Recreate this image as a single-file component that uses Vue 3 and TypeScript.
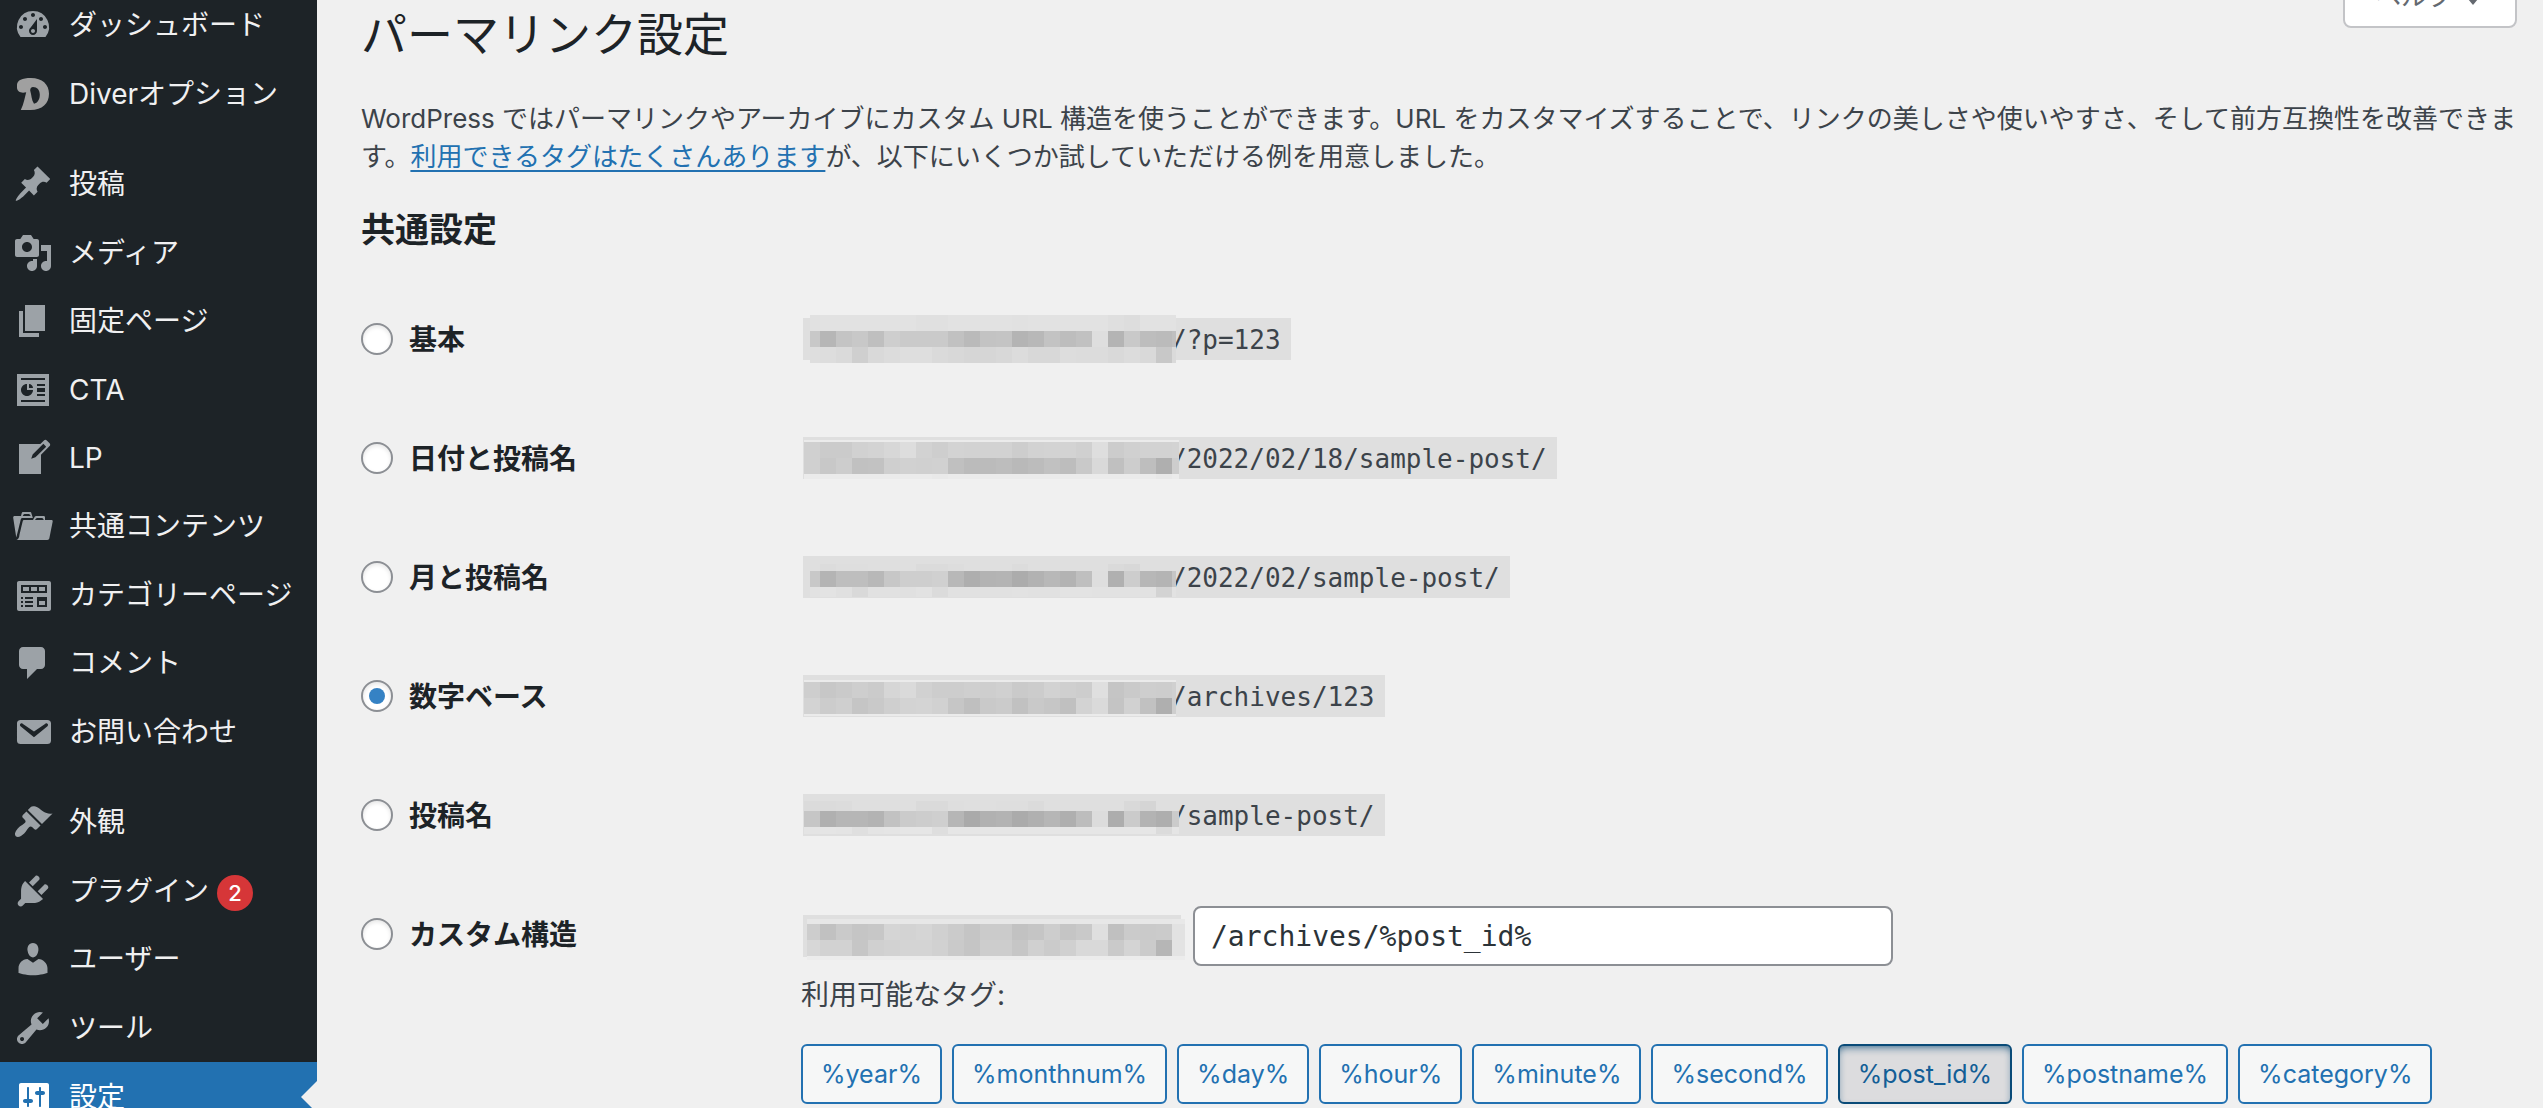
<script setup lang="ts">
import { ref } from 'vue'

interface MenuItem {
  label: string
  icon: string
  badge?: number
  current?: boolean
}

interface Band {
  y: number
  h: number
  tones: string
}

interface Structure {
  id: string
  label: string
  path: string
  from: number
  to: number
  bands: Band[]
}

const icons: Record<string, string> = {
  dashboard:
    'M3.76 16h12.48A7.998 7.998 0 0 0 10 3a7.998 7.998 0 0 0-6.24 13zM10 4c.55 0 1 .45 1 1s-.45 1-1 1-1-.45-1-1 .45-1 1-1zM6 6c.55 0 1 .45 1 1s-.45 1-1 1-1-.45-1-1 .45-1 1-1zm8 0c.55 0 1 .45 1 1s-.45 1-1 1-1-.45-1-1 .45-1 1-1zm-5.37 5.55L12 7v6c0 1.1-.9 2-2 2s-2-.9-2-2c0-.57.24-1.08.63-1.45zM4 10c.55 0 1 .45 1 1s-.45 1-1 1-1-.45-1-1 .45-1 1-1zm12 0c.55 0 1 .45 1 1s-.45 1-1 1-1-.45-1-1 .45-1 1-1zm-5 3c0-.55-.45-1-1-1s-1 .45-1 1 .45 1 1 1 1-.45 1-1z',
  diver:
    'M2 5.2C2.3 3.2 4.4 2 9 2c5.6 0 9 3.2 9 7.9C18 14.8 14.6 18 8.8 18H3.9c1.6-3.300 2-6.300 2.700-8.900C4.200 9.800 2.200 8.900 2 7zM8.600 8.200c.7 2.300.6 4.700 1.900 6.700 1.900-.4 2.900-2.300 2.900-4.500 0-2.400-1.300-3.900-3.400-3.900C9.100 6.500 8.600 7.200 8.600 8.200z',
  post:
    'M10.44 3.02l1.82-1.82 6.36 6.35-1.83 1.82c-1.05-.68-2.48-.57-3.41.36l-.75.75c-.92.93-1.04 2.35-.35 3.41l-1.83 1.82-2.41-2.41-2.8 2.79c-.42.42-3.38 2.71-3.8 2.29s1.86-3.39 2.28-3.81l2.79-2.79L4.1 9.36l1.83-1.82c1.05.69 2.48.57 3.4-.36l.75-.75c.93-.92 1.05-2.35.36-3.41z',
  media:
    'M13 11V4c0-.55-.45-1-1-1h-1.67L9 1H5L3.67 3H2c-.55 0-1 .45-1 1v7c0 .55.45 1 1 1h10c.55 0 1-.45 1-1zM7 4.5c1.38 0 2.5 1.12 2.5 2.5S8.38 9.5 7 9.5 4.5 8.38 4.5 7 5.62 4.5 7 4.5zM14 6h5v10.5c0 1.38-1.12 2.5-2.5 2.5S14 17.88 14 16.5s1.12-2.5 2.5-2.5c.17 0 .34.02.5.05V9h-3V6zm-4 8.05V13h2v3.5c0 1.38-1.12 2.5-2.5 2.5S7 17.88 7 16.5 8.12 14 9.5 14c.17 0 .34.02.5.05z',
  page: 'M6 15V2h10v13H6zm-1 1h8v2H3V5h2v11z',
  analytics:
    'M18 18V2H2v16h16zM16 5H4V4h12v1zM7 7v3h3c0 1.66-1.34 3-3 3s-3-1.34-3-3 1.34-3 3-3zm1 2V7c1.1 0 2 .9 2 2H8zm8-1h-4V7h4v1zm0 3h-4V9h4v2zm0 2h-4v-1h4v1zm0 3H4v-1h12v1z',
  write:
    'M16.89 1.2l1.41 1.41c.39.39.39 1.02 0 1.41L14 8.33V18H3V3h10.67l1.8-1.8c.4-.39 1.03-.4 1.42 0zm-5.66 8.48l5.37-5.36-1.42-1.42-5.36 5.37-.71 2.12z',
  portfolio:
    'M4 5H.78c-.37 0-.74.32-.69.84l1.56 9.99S3.5 8.47 3.86 6.7c.11-.53.61-.7.98-.7H10s-.7-2.08-.77-2.31C9.11 3.25 8.89 3 8.45 3H5.14c-.36 0-.7.23-.8.64C4.25 4.04 4 5 4 5zm4.88 0h-4s.42-1 .87-1h2.13c.48 0 1 1 1 1zM2.67 16.25c-.31.47-.76.75-1.26.75h15.73c.54 0 .92-.31 1.03-.83.44-2.19 1.68-8.44 1.68-8.44.07-.5-.3-.73-.62-.73H16V5.53c0-.16-.26-.53-.66-.53h-3.76c-.52 0-.87.58-.87.58L10 7H5.59c-.32 0-.63.19-.69.5 0 0-1.59 6.7-1.72 7.33-.07.37-.22.99-.51 1.42zM15.38 7H11s.58-1 1.13-1h2.29c.71 0 .96 1 .96 1z',
  feedback:
    'M3 3h15c.55 0 1 .45 1 1v13c0 .55-.45 1-1 1H3c-.55 0-1-.45-1-1V4c0-.55.45-1 1-1zM4 5v4h13V5zM5 6h3v2H5zM9 6h3v2H9zM13 6h3v2h-3zM4 11v1h1v-1zM6 11v1h4v-1zM4 13v1h1v-1zM6 13v1h4v-1zM4 15v1h1v-1zM6 15v1h4v-1zM12 11v5h5v-5zM13 13h3v2h-3z',
  comment:
    'M5 2h9c1.1 0 2 .9 2 2v7c0 1.1-.9 2-2 2h-2l-5 5v-5H5c-1.1 0-2-.9-2-2V4c0-1.1.9-2 2-2z',
  mail:
    'M3.87 4h13.25C18.37 4 19 4.59 19 5.79v8.42c0 1.19-.63 1.79-1.88 1.79H3.87c-1.25 0-1.88-.6-1.88-1.79V5.79c0-1.2.63-1.79 1.88-1.79zm6.62 8.6l6.74-5.53c.24-.2.43-.66.13-1.07-.29-.41-.82-.42-1.17-.17l-5.7 3.86L4.8 5.83c-.35-.25-.88-.24-1.17.17-.3.41-.11.87.13 1.07z',
  appearance:
    'M14.48 11.06L7.41 3.99l1.5-1.5c.5-.56 2.3-.47 3.51.32 1.21.8 1.43 1.28 2.91 2.1 1.18.64 2.45 1.26 4.45.85zm-.71.71L6.7 4.7 4.93 6.47c-.39.39-.39 1.02 0 1.41l1.06 1.06c.39.39.39 1.03 0 1.42-.6.6-1.43 1.11-2.21 1.69-.35.26-.7.53-1.01.84C1.43 14.23.4 16.08 1.4 17.07c.99 1 2.84-.03 4.18-1.36.31-.31.58-.66.85-1.02.57-.78 1.08-1.61 1.69-2.21.39-.39 1.02-.39 1.41 0l1.06 1.06c.39.39 1.02.39 1.41 0z',
  plugins:
    'M13.11 4.36L9.87 7.6 8 5.73l3.24-3.24c.35-.34 1.05-.2 1.56.32.52.51.66 1.21.31 1.55zm-8 1.77l.91-1.12 9.01 9.01-1.19.84c-.71.71-2.63 1.16-3.82 1.16H6.14L4.9 17.26c-.59.59-1.54.59-2.12 0-.59-.58-.59-1.53 0-2.12l1.24-1.24v-3.88c0-1.13.4-3.19 1.09-3.89zm7.26 3.97l3.24-3.24c.34-.35 1.04-.21 1.55.31.52.51.66 1.21.31 1.55l-3.24 3.25z',
  users:
    'M10 9.25c-2.27 0-2.73-3.44-2.73-3.44C7 4.02 7.82 2 9.97 2c2.16 0 2.98 2.02 2.71 3.81 0 0-.41 3.44-2.68 3.44zm0 2.57L12.72 10c2.39 0 4.52 2.33 4.52 4.53v2.49s-3.65 1.13-7.24 1.13c-3.65 0-7.24-1.13-7.24-1.13v-2.49c0-2.25 1.94-4.48 4.47-4.48z',
  tools:
    'M16.68 9.77c-1.34 1.34-3.3 1.67-4.95.99l-5.41 6.52c-.99.99-2.59.99-3.58 0s-.99-2.59 0-3.57l6.52-5.42c-.68-1.65-.35-3.61.99-4.95 1.28-1.28 3.12-1.62 4.72-1.06l-2.89 2.89 2.82 2.82 2.86-2.87c.53 1.58.18 3.39-1.08 4.65zM3.81 16.21c.4.39 1.04.39 1.43 0 .4-.4.4-1.04 0-1.43-.39-.4-1.03-.4-1.43 0-.39.39-.39 1.03 0 1.43z',
  settings:
    'M18 16V4c0-.55-.45-1-1-1H4c-.55 0-1 .45-1 1v13c0 .55.45 1 1 1h13c.55 0 1-.45 1-1zM8 11h1c.55 0 1 .45 1 1s-.45 1-1 1H8v1.5c0 .28-.22.5-.5.5s-.5-.22-.5-.5V13H6c-.55 0-1-.45-1-1s.45-1 1-1h1V5.5c0-.28.22-.5.5-.5s.5.22.5.5V11zm5-2h-1c-.55 0-1-.45-1-1s.45-1 1-1h1V5.5c0-.28.22-.5.5-.5s.5.22.5.5V7h1c.55 0 1 .45 1 1s-.45 1-1 1h-1v5.5c0 .28-.22.5-.5.5s-.5-.22-.5-.5V9z',
}

const groups: MenuItem[][] = [
  [
    { label: 'ダッシュボード', icon: 'dashboard' },
    { label: 'Diverオプション', icon: 'diver' },
  ],
  [
    { label: '投稿', icon: 'post' },
    { label: 'メディア', icon: 'media' },
    { label: '固定ページ', icon: 'page' },
    { label: 'CTA', icon: 'analytics' },
    { label: 'LP', icon: 'write' },
    { label: '共通コンテンツ', icon: 'portfolio' },
    { label: 'カテゴリーページ', icon: 'feedback' },
    { label: 'コメント', icon: 'comment' },
    { label: 'お問い合わせ', icon: 'mail' },
  ],
  [
    { label: '外観', icon: 'appearance' },
    { label: 'プラグイン', icon: 'plugins', badge: 2 },
    { label: 'ユーザー', icon: 'users' },
    { label: 'ツール', icon: 'tools' },
    { label: '設定', icon: 'settings', current: true },
  ],
]

// Each band is a strip of the pixelated domain: 24 grey tones, two hex digits each.
const structures: Structure[] = [
  {
    id: 'plain', label: '基本', path: '/?p=123', from: 7, to: 373,
    bands: [
      { y: -3, h: 16, tones: 'e1e2e2e2e2e2e2e0e0e2e2e2e2e1e2e2e2e2e2dfdde2e2e2' },
      { y: 13, h: 16, tones: 'c8b6c4c8bfcecacacac1bac3c4b4b8c3bdc1deb4c9bdbbc0' },
      { y: 29, h: 16, tones: 'dedddacfd9dcdededad8d6d6d8dcd8d8dddcdcd9dcd9c8da' },
    ],
  },
  {
    id: 'day-name', label: '日付と投稿名', path: '/2022/02/18/sample-post/', from: 1, to: 376,
    bands: [
      { y: 3, h: 2, tones: 'ebebebebebebebebebebebebebebebebebebebebebebebeb' },
      { y: 5, h: 16, tones: 'd0cbcbd1d3d7ddd2ced3d2d2d2cdd2d3d3d0deccd0d2d2d3' },
      { y: 21, h: 16, tones: 'd0c8cdc1c2cfd1d0d1c0bbbbbdb9bcc1bdc9d9c0cdbeafcd' },
      { y: 37, h: 5, tones: 'ebebebebebebebebe9ebebebebebebebebebebebebebe8eb' },
    ],
  },
  {
    id: 'month-name', label: '月と投稿名', path: '/2022/02/sample-post/', from: 7, to: 373,
    bands: [
      { y: 8, h: 7, tones: 'dfdcdededfdfdfdbdbdddfdfdfdcdfdfdfdfdfdad8dfdfdf' },
      { y: 15, h: 16, tones: 'c8b4bebeb8c7ceced0b8aeb3b4acb2b8b3bfdeb0cdb7b4c6' },
      { y: 31, h: 10, tones: 'e2e3e0d9e1e1e0e2dbe1e1e1e1e2e1e1e3e3e2e2e2e2d3e2' },
    ],
  },
  {
    id: 'numeric', label: '数字ベース', path: '/archives/123', from: 1, to: 373,
    bands: [
      { y: 5, h: 2, tones: 'ebebebebebebebebebebebebebebebebebebebebebebebeb' },
      { y: 7, h: 16, tones: 'cec7cacecbd6dad1cdcdcfced0caccd2cfcddfc5cacecdd0' },
      { y: 23, h: 16, tones: 'd3cccfc5c9cfd3d4d1c6bfc9cbc1c9c6c0d3dac4d1c1afce' },
      { y: 39, h: 2, tones: 'ebebebebebebebebebebebebebebebebebebebebebebebeb' },
    ],
  },
  {
    id: 'post-name', label: '投稿名', path: '/sample-post/', from: 1, to: 376,
    bands: [
      { y: 7, h: 10, tones: 'dbdbdcdfdfdfdfdadadedfdfdededbdfdfdfdfdfd9d5dfdf' },
      { y: 17, h: 16, tones: 'c6b0b6b6b3c2cbcdcfb6aab1b3abb0b6afbddcadcbb3aecb' },
      { y: 33, h: 7, tones: 'e4e5e4dfe4e5e6e6dee6e6e6e6e6e6e6e6e6e6e6e6e6dbe5' },
    ],
  },
]

const customBands: Band[] = [
  { y: 4, h: 5, tones: 'e7e7e7e7e7e7e7e7e7e7e7e7e7e7e7e7e7e7e7e7e7e7e7e8' },
  { y: 9, h: 16, tones: 'cdc1cac5c7d5d3d5d0cbc5cbcbc2c5cdc5c9dfc0cbcacbe2' },
  { y: 25, h: 16, tones: 'd7d2d2c6d0d2d4d4d1cac5cdcdc6d0cbd0d9d9cad4cbb6e3' },
  { y: 41, h: 4, tones: 'ecececececececececececececececececececececececec' },
]

const tags: string[] = [
  '%year%', '%monthnum%', '%day%', '%hour%', '%minute%', '%second%', '%post_id%', '%postname%', '%category%',
]

const selected = ref('numeric')
const custom = ref('/archives/%post_id%')

const CELL = 16
const FIRST = 17

function cells(band: Band, from: number, to: number) {
  return Array.from({ length: 24 }, (_, i) => {
    const start = i === 0 ? from : FIRST + (i - 1) * CELL
    const end = i === 23 ? to : FIRST + i * CELL
    return { x: start, w: end - start, y: band.y, h: band.h, fill: '#' + band.tones.slice(i * 2, i * 2 + 2).repeat(3) }
  })
}

function mosaic(bands: Band[], from: number, to: number) {
  return bands.flatMap((band) => cells(band, from, to))
}
</script>

<template>
  <div class="admin">
    <nav class="sidebar" aria-label="メインメニュー">
      <ul v-for="(group, g) in groups" :key="g" class="group">
        <li v-for="item in group" :key="item.label">
          <a href="#" class="item" :class="{ current: item.current }">
            <svg class="icon" :class="{ muted: item.icon === 'diver' }" viewBox="0 0 20 20" aria-hidden="true">
              <path :d="icons[item.icon]" fill-rule="evenodd" />
            </svg>
            <span class="name">{{ item.label }}</span>
            <span v-if="item.badge" class="badge">{{ item.badge }}</span>
          </a>
        </li>
      </ul>
    </nav>

    <main class="content">
      <button type="button" class="help">
        ヘルプ
        <svg viewBox="0 0 20 20" aria-hidden="true"><path d="M5 8h10l-5 6z" /></svg>
      </button>

      <h1>パーマリンク設定</h1>
      <p class="intro">
        WordPress ではパーマリンクやアーカイブにカスタム URL 構造を使うことができます。URL をカスタマイズすることで、リンクの美しさや使いやすさ、そして前方互換性を改善できます。<a href="#">利用できるタグはたくさんあります</a>が、以下にいくつか試していただける例を用意しました。
      </p>
      <h2>共通設定</h2>

      <table class="form">
        <tbody>
          <tr v-for="s in structures" :key="s.id">
            <th scope="row">
              <label class="choice">
                <input v-model="selected" type="radio" name="structure" :value="s.id" />
                <span>{{ s.label }}</span>
              </label>
            </th>
            <td>
              <code class="url">
                <svg class="mosaic" aria-hidden="true">
                  <rect
                    v-for="(c, i) in mosaic(s.bands, s.from, s.to)"
                    :key="i" :x="c.x" :y="c.y" :width="c.w" :height="c.h" :fill="c.fill"
                  />
                </svg>
                <span class="path">{{ s.path }}</span>
              </code>
            </td>
          </tr>
          <tr>
            <th scope="row">
              <label class="choice">
                <input v-model="selected" type="radio" name="structure" value="custom" />
                <span>カスタム構造</span>
              </label>
            </th>
            <td class="custom">
              <div class="line">
                <code class="url base">
                  <svg class="mosaic" aria-hidden="true">
                    <rect
                      v-for="(c, i) in mosaic(customBands, 4, 382)"
                      :key="i" :x="c.x" :y="c.y" :width="c.w" :height="c.h" :fill="c.fill"
                    />
                  </svg>
                </code>
                <input v-model="custom" type="text" class="field" aria-label="カスタム構造" />
              </div>
              <p class="hint">利用可能なタグ:</p>
              <div class="tags">
                <button
                  v-for="t in tags" :key="t" type="button" class="tag"
                  :class="{ active: custom.includes(t) }"
                >{{ t }}</button>
              </div>
            </td>
          </tr>
        </tbody>
      </table>
    </main>
  </div>
</template>

<style>
body {
  background: #f0f0f1;
}
</style>

<style scoped>
.admin {
  display: flex;
  height: 100vh;
  overflow: hidden;
  background: #f0f0f0;
  color: #3c434a;
  font-family: Inter, "Noto Sans CJK JP", sans-serif;
  font-size: 26px;
  line-height: 38px;
}

.sidebar {
  flex: none;
  width: 317px;
  background: #1d2327;
}

.group {
  display: grid;
  grid-auto-rows: 1fr;
  list-style: none;
  height: 137px;
  margin: 0 0 22px;
  padding: 0;
}

.group:nth-child(1) {
  margin-top: -9px;
}

.group:nth-child(2) {
  height: 616px;
}

.group:nth-child(3) {
  height: 343px;
}

.item {
  display: flex;
  align-items: center;
  position: relative;
  height: 100%;
  padding-left: 13px;
  color: #f0f0f1;
  font-size: 28px;
  line-height: 36px;
  text-decoration: none;
}

.icon {
  flex: none;
  width: 40px;
  height: 40px;
  margin-right: 16px;
  fill: #9ca2a7;
}

.icon.muted {
  fill: #a0a0a0;
}

.current {
  background: #2271b1;
  color: #fff;
}

.current .icon {
  fill: #fff;
}

.current::after {
  content: "";
  position: absolute;
  right: 0;
  top: 50%;
  margin-top: -16px;
  border: 16px solid transparent;
  border-left-width: 0;
  border-right-color: #f0f0f0;
}

.badge {
  width: 36px;
  height: 36px;
  margin: 4px 0 0 8px;
  border-radius: 18px;
  background: #d63638;
  color: #fff;
  font-size: 22px;
  font-weight: 500;
  line-height: 36px;
  text-align: center;
}

.content {
  flex: 1;
  min-width: 0;
  position: relative;
  padding: 0 24px 0 44px;
}

.help {
  position: absolute;
  top: -34px;
  right: 26px;
  display: flex;
  align-items: center;
  width: 174px;
  height: 62px;
  padding: 0 12px 0 30px;
  border: 2px solid #c3c4c7;
  border-radius: 0 0 8px 8px;
  background: #fff;
  color: #646970;
  font: inherit;
}

.help svg {
  flex: none;
  width: 40px;
  height: 40px;
  fill: #646970;
}

h1 {
  margin: 0;
  padding-top: 4px;
  color: #1d2327;
  font-size: 46px;
  font-weight: 400;
  line-height: 60px;
}

.intro {
  margin: 36px 0 0;
}

.intro a {
  color: #2271b1;
  text-decoration: underline;
  text-underline-offset: 4px;
  text-decoration-thickness: 2px;
}

h2 {
  margin: 33px 0 0;
  color: #1d2327;
  font-size: 34px;
  font-weight: 600;
  line-height: 42px;
}

.form {
  width: 100%;
  margin-top: 30px;
  border-collapse: collapse;
}

.form tr {
  height: 119px;
}

.form th {
  width: 440px;
  padding: 37px 0 0;
  color: #1d2327;
  font-size: 28px;
  font-weight: 600;
  text-align: left;
  vertical-align: top;
}

.form td {
  padding: 37px 0 0;
  vertical-align: top;
}

.form .custom {
  padding-top: 30px;
}

.choice {
  display: flex;
  align-items: center;
  gap: 16px;
  height: 42px;
  line-height: 42px;
}

.choice span {
  padding-top: 2px;
}

.choice input {
  appearance: none;
  display: grid;
  place-content: center;
  box-sizing: border-box;
  width: 32px;
  height: 32px;
  margin: 0;
  border: 2px solid #8c8f94;
  border-radius: 50%;
  background: #fff;
  box-shadow: inset 0 2px 4px rgba(0, 0, 0, 0.1);
}

.choice input:checked::before {
  content: "";
  width: 16px;
  height: 16px;
  border-radius: 50%;
  background: #3582c4;
}

.url {
  display: flex;
  width: max-content;
  height: 42px;
  margin-left: 2px;
  padding-right: 10px;
  background: #dfdfdf;
  font-family: "DejaVu Sans Mono", "Liberation Mono", monospace;
  font-size: 26px;
  line-height: 44px;
}

.mosaic {
  position: relative;
  z-index: 1;
  width: 368px;
  height: 42px;
  overflow: visible;
}

.line {
  display: flex;
  align-items: center;
  gap: 12px;
}

.field {
  box-sizing: border-box;
  width: 700px;
  height: 60px;
  padding: 0 16px;
  border: 2px solid #8c8f94;
  border-radius: 8px;
  background: #fff;
  color: #2c3338;
  font-family: "DejaVu Sans Mono", "Liberation Mono", monospace;
  font-size: 28px;
}

.hint {
  margin: 8px 0 28px;
  font-size: 28px;
  line-height: 42px;
}

.tags {
  display: flex;
  flex-wrap: wrap;
  gap: 10px;
}

.tag {
  height: 60px;
  padding: 0 18px;
  border: 2px solid #2271b1;
  border-radius: 6px;
  background: #f6f7f7;
  color: #2271b1;
  font: inherit;
  font-size: 25px;
}

.tag.active {
  border-color: #0a4b78;
  background: #dcdcde;
  color: #135e96;
  box-shadow: inset 0 4px 10px -4px #0a4b78;
}
</style>
